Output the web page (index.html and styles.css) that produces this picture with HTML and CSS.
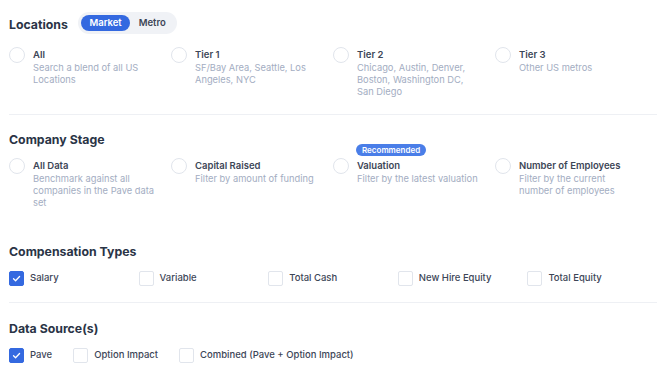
FILE: index.html
```html
<!DOCTYPE html>
<html>
<head>
    <title>Benchmark filters</title>
    <link rel="stylesheet" href="styles.css">
</head>
<body>
    <div class="filters">

        <div class="section section-first">
            <div class="section-head">
                <h2 class="section-title">Locations</h2>
                <div class="toggle">
                    <span class="toggle-btn active">Market</span>
                    <span class="toggle-btn">Metro</span>
                </div>
            </div>
            <div class="options">
                <label class="option">
                    <span class="radio"></span>
                    <span class="option-text">
                        <span class="option-title">All</span>
                        <span class="option-desc">Search a blend of all US Locations</span>
                    </span>
                </label>
                <label class="option">
                    <span class="radio"></span>
                    <span class="option-text">
                        <span class="option-title">Tier 1</span>
                        <span class="option-desc">SF/Bay Area, Seattle, Los Angeles, NYC</span>
                    </span>
                </label>
                <label class="option">
                    <span class="radio"></span>
                    <span class="option-text">
                        <span class="option-title">Tier 2</span>
                        <span class="option-desc">Chicago, Austin, Denver, Boston, Washington DC, San Diego</span>
                    </span>
                </label>
                <label class="option">
                    <span class="radio"></span>
                    <span class="option-text">
                        <span class="option-title">Tier 3</span>
                        <span class="option-desc">Other US metros</span>
                    </span>
                </label>
            </div>
        </div>

        <hr class="divider">

        <div class="section section-stage">
            <div class="section-head">
                <h2 class="section-title">Company Stage</h2>
            </div>
            <div class="options">
                <label class="option">
                    <span class="radio"></span>
                    <span class="option-text">
                        <span class="option-title">All Data</span>
                        <span class="option-desc">Benchmark against all companies in the Pave data set</span>
                    </span>
                </label>
                <label class="option">
                    <span class="radio"></span>
                    <span class="option-text">
                        <span class="option-title">Capital Raised</span>
                        <span class="option-desc">Filter by amount of funding</span>
                    </span>
                </label>
                <label class="option">
                    <span class="radio"></span>
                    <span class="option-text">
                        <span class="badge">Recommended</span>
                        <span class="option-title">Valuation</span>
                        <span class="option-desc">Filter by the latest valuation</span>
                    </span>
                </label>
                <label class="option">
                    <span class="radio"></span>
                    <span class="option-text">
                        <span class="option-title">Number of Employees</span>
                        <span class="option-desc">Filter by the current number of employees</span>
                    </span>
                </label>
            </div>
        </div>

        <div class="section section-comp">
            <div class="section-head">
                <h2 class="section-title">Compensation Types</h2>
            </div>
            <div class="checks checks-grid">
                <label class="check"><span class="box checked"><svg viewBox="0 0 14 14"><path d="M3.8 7.3l2.2 2.1 4.3-4.5"/></svg></span>Salary</label>
                <label class="check"><span class="box"></span>Variable</label>
                <label class="check"><span class="box"></span>Total Cash</label>
                <label class="check"><span class="box"></span>New Hire Equity</label>
                <label class="check"><span class="box"></span>Total Equity</label>
            </div>
        </div>

        <hr class="divider">

        <div class="section section-source">
            <div class="section-head">
                <h2 class="section-title">Data Source(s)</h2>
            </div>
            <div class="checks checks-row">
                <label class="check"><span class="box checked"><svg viewBox="0 0 14 14"><path d="M3.8 7.3l2.2 2.1 4.3-4.5"/></svg></span>Pave</label>
                <label class="check"><span class="box"></span>Option Impact</label>
                <label class="check"><span class="box"></span>Combined (Pave + Option Impact)</label>
            </div>
        </div>

    </div>
</body>
</html>
```

FILE: styles.css
```css
body {
    margin: 0;
    background-color: #fff;
    font-family: 'Inter', 'Noto Sans', sans-serif;
    color: #2c3648;
}

.filters {
    width: 648px;
    padding: 12px 9px 0 9px;
}

.section-head {
    display: flex;
    align-items: center;
    margin-bottom: 9px;
}

.section-first .section-head {
    margin-bottom: 13px;
}

.section-first .section-title {
    padding-top: 3px;
}

.section-title {
    margin: 0;
    font-size: 12.3px;
    line-height: 18px;
    font-weight: 700;
    color: #2a3446;
}

.toggle {
    display: flex;
    margin-left: 10px;
    padding: 3px;
    background-color: #f0f2f6;
    border-radius: 11px;
}

.toggle-btn {
    padding: 0 8.5px;
    height: 16px;
    line-height: 16px;
    font-size: 9.5px;
    font-weight: 600;
    color: #3d4657;
    border-radius: 8px;
}

.toggle-btn.active {
    background-color: #3469e0;
    color: white;
}

.options {
    display: grid;
    grid-template-columns: repeat(4, 1fr);
}

.option {
    display: flex;
    align-items: flex-start;
    gap: 8px;
}

.radio {
    flex: none;
    width: 14px;
    height: 14px;
    border: 1px solid #e1e5ec;
    border-radius: 50%;
}

.option-text {
    position: relative;
    display: flex;
    flex-direction: column;
    max-width: 121px;
}

.option-title {
    font-size: 9.5px;
    line-height: 15px;
    font-weight: 600;
    color: #3d4657;
}

.option-desc {
    font-size: 9.3px;
    line-height: 12px;
    color: #a3adc2;
}

.badge {
    position: absolute;
    top: -14px;
    left: -1px;
    height: 12px;
    line-height: 12px;
    padding: 0 6px;
    font-size: 8px;
    font-weight: 600;
    color: white;
    background-color: #4a7ee8;
    border-radius: 6px;
}

.section-first {
    padding-bottom: 16px;
}

.divider {
    margin: 0;
    border: none;
    border-top: 1px solid #eef0f4;
}

.section-stage {
    padding-top: 16px;
}

.section-comp {
    padding-top: 34px;
    padding-bottom: 16px;
}

.section-source {
    padding-top: 17px;
}

.checks {
    font-size: 9.5px;
    line-height: 16px;
    font-weight: 500;
    color: #3d4657;
}

.checks-grid {
    display: grid;
    grid-template-columns: repeat(5, 1fr);
}

.checks-row {
    display: flex;
    gap: 21px;
}

.check {
    display: flex;
    align-items: center;
    gap: 6px;
}

.box {
    flex: none;
    width: 13px;
    height: 13px;
    border: 1px solid #e1e5ec;
    border-radius: 2px;
}

.box.checked {
    background-color: #3469e0;
    border-color: #3469e0;
}

.box svg {
    display: block;
    width: 13px;
    height: 13px;
}

.box path {
    fill: none;
    stroke: white;
    stroke-width: 1.4;
    stroke-linecap: round;
    stroke-linejoin: round;
}
```
